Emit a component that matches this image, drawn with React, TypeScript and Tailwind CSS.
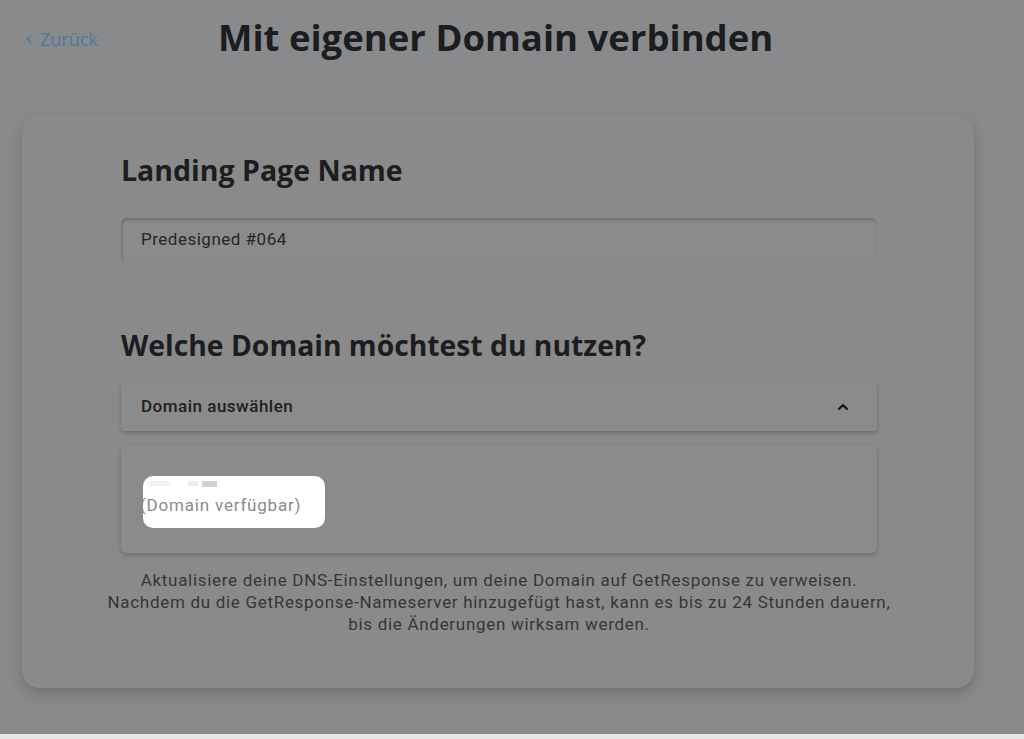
import React from 'react';
import { ChevronLeft, ChevronUp } from 'lucide-react';

const heading = { fontFamily: '"Open Sans", "Noto Sans", sans-serif' };

export default function App() {
  return (
    <div className="w-[1024px] h-[739px] overflow-hidden bg-[#e6e6e6]" style={{ fontFamily: 'Roboto, "Liberation Sans", sans-serif' }}>
      <div className="h-[734px] bg-[#898a8c] relative">
        {/* Header */}
        <div className="flex items-center h-[74px] px-[22px]">
          <button className="flex items-center gap-[4px] text-[18px] text-[#4b7aa1] w-[196px] mt-[4px]" style={heading}>
            <ChevronLeft className="w-[14px] h-[14px]" strokeWidth={2.5} />
            Zurück
          </button>
          <h1 className="text-[36.5px] font-bold text-[#1b1d20] leading-none" style={heading}>
            Mit eigener Domain verbinden
          </h1>
        </div>

        {/* Card */}
        <div className="mx-[22px] mt-[41px] w-[952px] h-[573px] rounded-[18px] bg-[#8a8a8b] shadow-[0_6px_14px_rgba(0,0,0,0.18)] pl-[99px] pr-[97px] pt-[41px]">
          <h2 className="text-[28.5px] font-bold text-[#1b1d20] leading-none" style={heading}>
            Landing Page Name
          </h2>
          <div className="mt-[33px] h-[45px] rounded-[6px] bg-[#8b8b8b] shadow-[inset_1px_2px_3px_rgba(0,0,0,0.22)] flex items-center px-[20px] text-[17px] tracking-[0.5px] text-[#262626]">
            Predesigned #064
          </div>

          <h2 className="mt-[68px] text-[28.3px] font-bold text-[#1b1d20] leading-none" style={heading}>
            Welche Domain möchtest du nutzen?
          </h2>

          {/* Select */}
          <div className="mt-[24px] h-[48px] rounded-[4px] bg-[#8b8b8b] shadow-[0_2px_4px_rgba(0,0,0,0.22)] flex items-center justify-between pl-[20px] pr-[26px]">
            <span className="text-[17px] font-medium tracking-[0.5px] text-[#202020]">Domain auswählen</span>
            <ChevronUp className="w-[16px] h-[16px] text-[#111]" strokeWidth={3} />
          </div>

          {/* Options */}
          <div className="mt-[14px] h-[108px] rounded-[6px] bg-[#8b8b8b] shadow-[0_2px_5px_rgba(0,0,0,0.22)] relative">
            <div className="absolute left-[22px] top-[31px] w-[182px] h-[52px] rounded-[10px] bg-white" />
            <div className="absolute left-[27px] top-[36px] flex items-center gap-[4px]">
              <div className="w-[22px] h-[5px] bg-[#f3f3f3]" />
              <div className="w-[10px] h-[5px] ml-[14px] bg-[#ececec]" />
              <div className="w-[15px] h-[6px] bg-[#d2d2d2]" />
            </div>
            <div className="absolute left-[19px] top-[48px] text-[17px] tracking-[0.8px] text-[#8a8a8a]">(Domain verfügbar)</div>
          </div>

          <p className="mt-[16px] -mx-[20px] text-center text-[17px] leading-[22px] text-[#34363a] tracking-[0.7px]">
            Aktualisiere deine DNS-Einstellungen, um deine Domain auf GetResponse zu verweisen.
            <br />
            Nachdem du die GetResponse-Nameserver hinzugefügt hast, kann es bis zu 24 Stunden dauern,
            <br />
            bis die Änderungen wirksam werden.
          </p>
        </div>
      </div>
    </div>
  );
}
